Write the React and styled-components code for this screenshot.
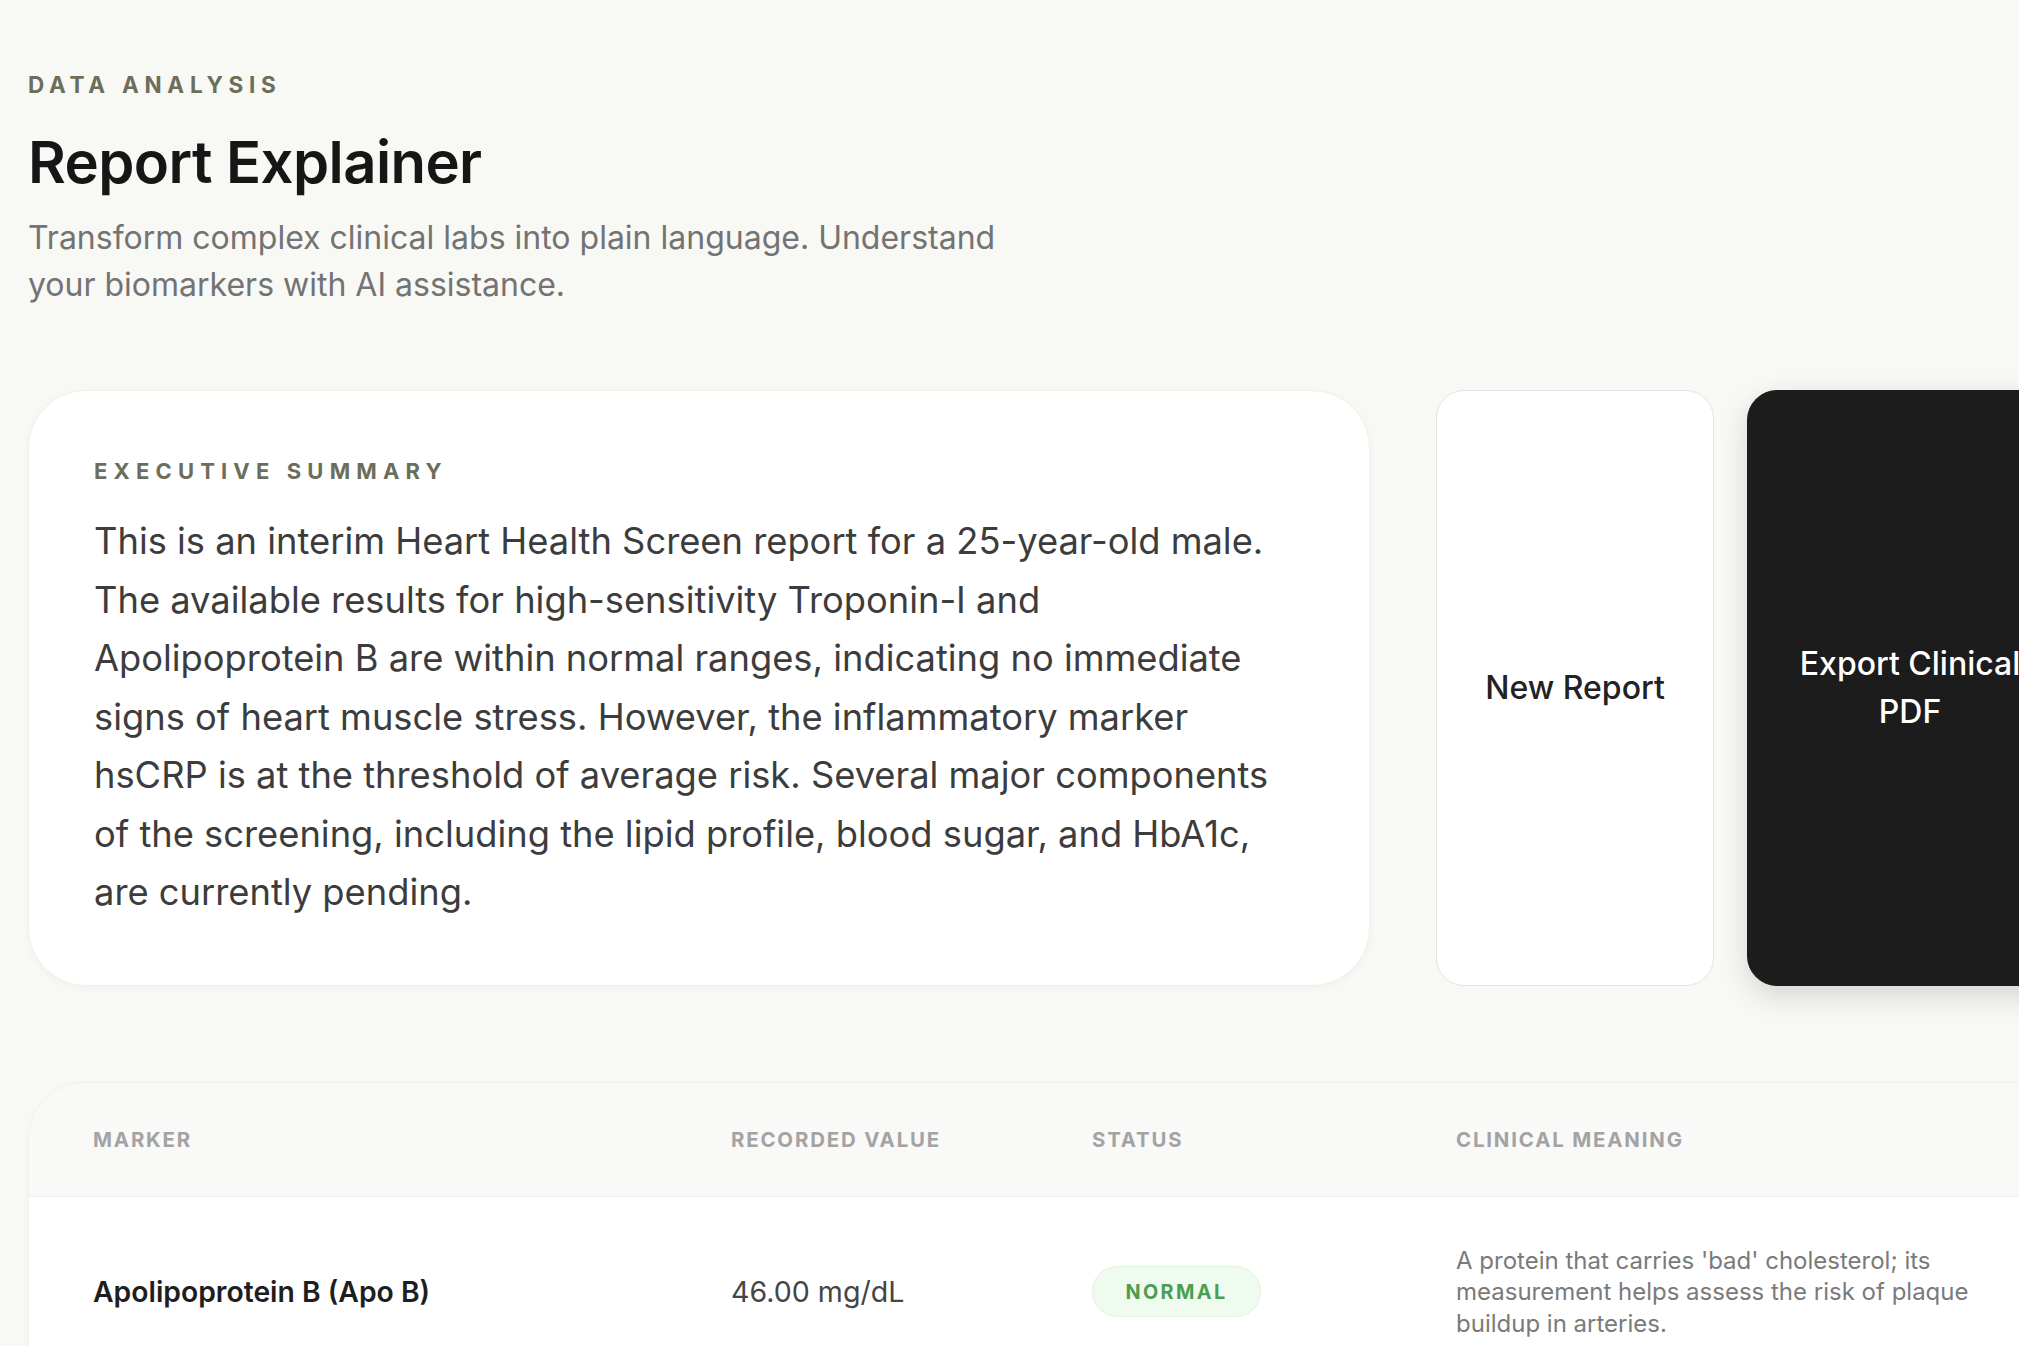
import React from "react";
import styled, { createGlobalStyle } from "styled-components";

const GlobalStyle = createGlobalStyle`
  html, body {
    margin: 0;
    padding: 0;
    background: #f8f8f5;
    overflow: hidden;
  }
  body {
    font-family: Inter, "Noto Sans", "Liberation Sans", sans-serif;
    -webkit-font-smoothing: antialiased;
  }
  * { box-sizing: border-box; }
`;

const Page = styled.main`
  width: 2074px;
  padding: 70px 0 0 28px;
`;

const Eyebrow = styled.div`
  font-size: 22.5px;
  line-height: 30px;
  font-weight: 700;
  letter-spacing: 0.255em;
  text-transform: uppercase;
  color: #6b6e5b;
`;

const Title = styled.h1`
  margin: 27px 0 0;
  font-size: 58px;
  line-height: 70px;
  font-weight: 600;
  letter-spacing: -0.01em;
  color: #161616;
`;

const Subtitle = styled.p`
  margin: 18px 0 0;
  max-width: 1010px;
  font-size: 32px;
  line-height: 46.5px;
  font-weight: 400;
  color: #737373;
`;

const TopRow = styled.section`
  display: flex;
  align-items: stretch;
  gap: 66px;
  margin-top: 82px;
`;

const SummaryCard = styled.div`
  flex: 0 0 1342px;
  background: #ffffff;
  border-radius: 58px;
  padding: 65px 65px 63px;
  border: 1px solid #f0f0ec;
  box-shadow: 0 2px 8px rgba(0, 0, 0, 0.035);
`;

const SectionLabel = styled.div`
  font-size: 22px;
  line-height: 30px;
  font-weight: 700;
  letter-spacing: 0.28em;
  text-transform: uppercase;
  color: #6b6e5b;
`;

const SummaryText = styled.p`
  margin: 26px 0 0;
  max-width: 1185px;
  font-size: 36.3px;
  line-height: 58.5px;
  font-weight: 400;
  color: #3c3c3c;
`;

const Actions = styled.div`
  display: flex;
  gap: 33px;
`;

const ActionButton = styled.button`
  width: ${(p) => p.$w}px;
  padding: 0 36px;
  border-radius: ${(p) => (p.$primary ? 30 : 28)}px;
  border: 1px solid ${(p) => (p.$primary ? "#1c1c1c" : "#e3e3e3")};
  background: ${(p) => (p.$primary ? "#1c1c1c" : "#ffffff")};
  color: ${(p) => (p.$primary ? "#ffffff" : "#222222")};
  box-shadow: ${(p) => (p.$primary ? "0 10px 30px rgba(0,0,0,0.14)" : "none")};
  font-family: inherit;
  font-size: 32px;
  line-height: 48px;
  font-weight: 500;
  text-align: center;
  cursor: pointer;
`;

const TableCard = styled.section`
  margin-top: 96px;
  background: #ffffff;
  border-radius: 58px 58px 0 0;
  border: 1px solid #f0f0ec;
  overflow: hidden;
  box-shadow: 0 2px 8px rgba(0, 0, 0, 0.03);
`;

const Grid = styled.div`
  display: grid;
  grid-template-columns: 638px 361px 364px 600px;
  align-items: center;
  padding-left: 64px;
  background: ${(p) => (p.$head ? "#f9f9f8" : "#ffffff")};
  border-bottom: 1px solid #f1f1ef;
`;

const HeadCell = styled.div`
  padding: 42px 0;
  font-size: 20.4px;
  line-height: 29px;
  font-weight: 700;
  letter-spacing: 0.09em;
  text-transform: uppercase;
  color: #a3a3a3;
`;

const Cell = styled.div`
  padding: 48px 0;
  font-size: ${(p) => (p.$small ? "24px" : p.$bold ? "28.3px" : "28.6px")};
  line-height: ${(p) => (p.$small ? "31.5px" : "40px")};
  font-weight: ${(p) => (p.$bold ? 600 : 400)};
  color: ${(p) => (p.$bold ? "#1e1e1e" : p.$small ? "#7a7a7a" : "#454545")};
  max-width: ${(p) => (p.$small ? "560px" : "none")};
`;

const Badge = styled.span`
  display: inline-flex;
  align-items: center;
  justify-content: center;
  width: 169px;
  height: 51px;
  border-radius: 26px;
  background: #f0fbf0;
  border: 1px solid #dff3df;
  color: #4b9e50;
  font-size: 19.8px;
  font-weight: 700;
  letter-spacing: 0.12em;
`;

const rows = [
  {
    marker: "Apolipoprotein B (Apo B)",
    value: "46.00 mg/dL",
    status: "NORMAL",
    meaning:
      "A protein that carries 'bad' cholesterol; its measurement helps assess the risk of plaque buildup in arteries.",
  },
];

export default function App() {
  return (
    <>
      <GlobalStyle />
      <Page>
        <Eyebrow>Data Analysis</Eyebrow>
        <Title>Report Explainer</Title>
        <Subtitle>
          Transform complex clinical labs into plain language. Understand your
          biomarkers with AI assistance.
        </Subtitle>

        <TopRow>
          <SummaryCard>
            <SectionLabel>Executive Summary</SectionLabel>
            <SummaryText>
              This is an interim Heart Health Screen report for a 25-year-old
              male. The available results for high-sensitivity Troponin-I and
              Apolipoprotein B are within normal ranges, indicating no immediate
              signs of heart muscle stress. However, the inflammatory marker
              hsCRP is at the threshold of average risk. Several major
              components of the screening, including the lipid profile, blood
              sugar, and HbA1c, are currently pending.
            </SummaryText>
          </SummaryCard>
          <Actions>
            <ActionButton $w={278}>New Report</ActionButton>
            <ActionButton $w={326} $primary>
              Export Clinical PDF
            </ActionButton>
          </Actions>
        </TopRow>

        <TableCard>
          <Grid $head>
            <HeadCell>Marker</HeadCell>
            <HeadCell>Recorded Value</HeadCell>
            <HeadCell>Status</HeadCell>
            <HeadCell>Clinical Meaning</HeadCell>
          </Grid>
          {rows.map((r) => (
            <Grid key={r.marker}>
              <Cell $bold>{r.marker}</Cell>
              <Cell>{r.value}</Cell>
              <Cell>
                <Badge>{r.status}</Badge>
              </Cell>
              <Cell $small>{r.meaning}</Cell>
            </Grid>
          ))}
        </TableCard>
      </Page>
    </>
  );
}
